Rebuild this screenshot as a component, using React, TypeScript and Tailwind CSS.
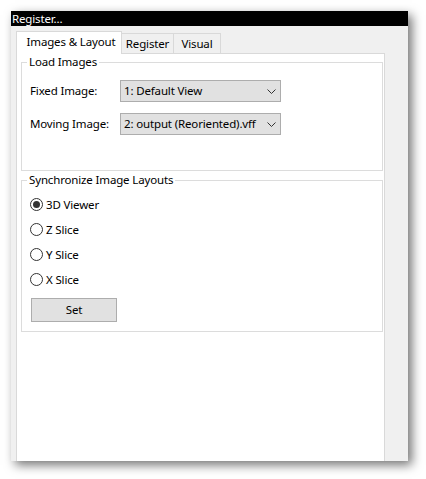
import React from "react";

const font = { fontFamily: '"Noto Sans", "Segoe UI", sans-serif' };

function Chevron() {
  return (
    <svg width="9" height="5" viewBox="0 0 9 5" className="shrink-0">
      <path d="M0.5 0.5 L4.5 4.5 L8.5 0.5" fill="none" stroke="#333" strokeWidth="1" />
    </svg>
  );
}

function Combo({ value }: { value: string }) {
  return (
    <div className="flex h-[22px] w-[161px] items-center justify-between border border-[#adadad] bg-[#e1e1e1] pl-[3px] pr-[4px]">
      <span className="whitespace-nowrap">{value}</span>
      <Chevron />
    </div>
  );
}

function Radio({ label, checked }: { label: string; checked?: boolean }) {
  return (
    <div className="flex h-[25px] items-center gap-[3px]">
      <span className="flex h-[13px] w-[13px] items-center justify-center rounded-full border border-[#333] bg-white">
        {checked && <span className="h-[7px] w-[7px] rounded-full bg-[#333]" />}
      </span>
      <span>{label}</span>
    </div>
  );
}

export default function App() {
  return (
    <div
      className="min-h-[479px] bg-white p-[11px] text-[11.5px] leading-[16px] tracking-[-0.15px] text-black"
      style={font}
    >
      <div className="flex h-[450px] w-[397px] flex-col shadow-[4px_4px_10px_rgba(0,0,0,0.55)]">
        <div className="h-[15px] bg-black pl-px leading-[15px] text-white">Register...</div>
        <div className="flex flex-1 flex-col bg-[#f0f0f0] pl-[5px] pr-[23px] pt-[5px]">
          <div className="flex h-[22px] items-end">
            <div className="relative z-10 -mb-px flex h-[23px] w-[106px] items-center justify-center border-x border-t border-[#d9d9d9] bg-white pb-[2px] pl-[4px]">
              Images &amp; Layout
            </div>
            <div className="flex h-[20px] w-[52px] items-center justify-center border-r border-t border-[#d9d9d9] bg-[#f0f0f0]">
              Register
            </div>
            <div className="flex h-[20px] w-[47px] items-center justify-center border-r border-t border-[#d9d9d9] bg-[#f0f0f0]">
              Visual
            </div>
          </div>
          <div className="flex-1 border-x border-t border-[#d9d9d9] bg-white pl-[4px] pr-[1px]">
            <fieldset className="h-[117px] border border-[#dcdcdc] pl-[8px] pt-[10px]">
              <legend className="-ml-[3px] px-[2px]">Load Images</legend>
              <div className="flex flex-col gap-[11px]">
                <div className="flex items-center">
                  <span className="w-[90px]">Fixed Image:</span>
                  <Combo value="1: Default View" />
                </div>
                <div className="flex items-center">
                  <span className="w-[90px]">Moving Image:</span>
                  <Combo value="2: output (Reoriented).vff" />
                </div>
              </div>
            </fieldset>
            <fieldset className="mt-px border border-[#dcdcdc] pb-[9px] pl-[8px] pt-[4px]">
              <legend className="-ml-[3px] px-[2px]">Synchronize Image Layouts</legend>
              <Radio label="3D Viewer" checked />
              <Radio label="Z Slice" />
              <Radio label="Y Slice" />
              <Radio label="X Slice" />
              <button
                type="button"
                className="ml-px mt-[6px] flex h-[24px] w-[86px] items-center justify-center border border-[#adadad] bg-[#e1e1e1]"
              >
                Set
              </button>
            </fieldset>
          </div>
        </div>
      </div>
    </div>
  );
}
